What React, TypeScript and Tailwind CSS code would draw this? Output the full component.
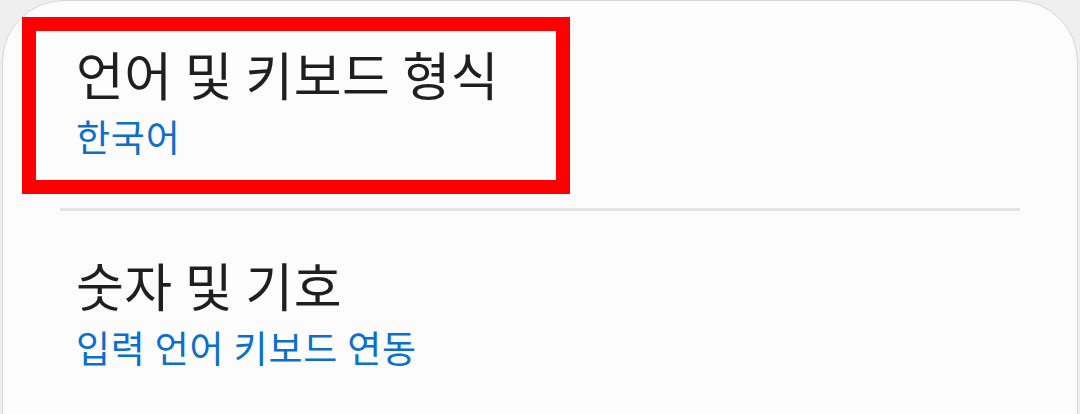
import React from "react";

const items = [
  { title: "언어 및 키보드 형식", sub: "한국어" },
  { title: "숫자 및 기호", sub: "입력 언어 키보드 연동" },
];

export default function App() {
  return (
    <div
      className="w-[1080px] h-[414px] overflow-hidden bg-[#efefef] px-[2px]"
      style={{ fontFamily: '"Noto Sans CJK KR", "Noto Sans", sans-serif' }}
    >
      <div className="relative h-[440px] rounded-t-[62px] border border-[#d6d6d6] bg-[#fcfcfc]">
        {items.map((item, i) => (
          <div key={item.title}>
            {i > 0 && <div className="mx-[57px] h-[3px] bg-[#e4e4e4]" />}
            <div className={i === 0 ? "pl-[73px] pt-[43px] pb-[50px]" : "pl-[73px] pt-[44px] pb-[40px]"}>
              <div className="text-[52px] leading-[60px] tracking-[0.5px] text-[#1f1f1f]">{item.title}</div>
              <div className="mt-[10px] text-[37px] leading-[44px] tracking-[0.8px] text-[#0b6fce]">{item.sub}</div>
            </div>
          </div>
        ))}

        {/* highlight box */}
        <div className="absolute left-[19px] top-[16px] w-[548px] h-[177px] border-[14px] border-[#ff0000] pointer-events-none" />
      </div>
    </div>
  );
}
